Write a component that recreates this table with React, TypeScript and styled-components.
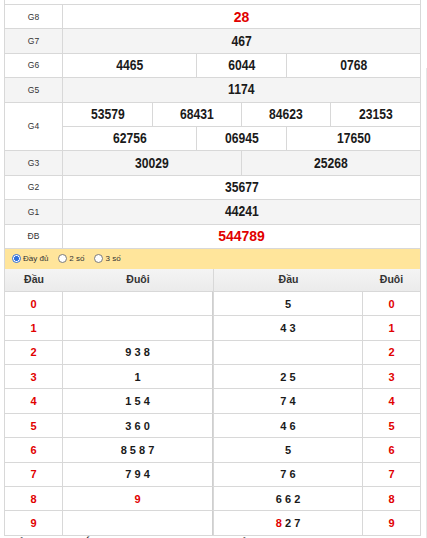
import React from "react";
import styled, { createGlobalStyle } from "styled-components";

const Global = createGlobalStyle`
  html, body { margin: 0; padding: 0; overflow: hidden; background: #fff; }
  body { font-family: "Liberation Sans", Arial, sans-serif; color: #333; }
  * { box-sizing: border-box; }
`;

const LINE = "#d8d8d8";
const RED = "#e10000";

const Page = styled.div`
  display: flex;
  align-items: flex-start;
`;

const Main = styled.main`
  margin-left: 4px;
  width: 417px;
  flex: none;
`;

const Aside = styled.aside`
  margin-left: 5px;
  margin-top: 68px;
  width: 1px;
  height: 470px;
  border-left: 1px solid #e6e6e6;
`;

const Board = styled.section`
  border-left: 1px solid ${LINE};
  border-right: 1px solid ${LINE};
`;

const CutRow = styled.div`
  height: 5px;
  border-bottom: 1px solid ${LINE};
`;

const PrizeRow = styled.div<{ $alt?: boolean; $h?: number }>`
  display: grid;
  grid-template-columns: 58px 1fr;
  height: ${(p) => (p.$h ?? 1) * 24.4}px;
  background: ${(p) => (p.$alt ? "#f4f4f4" : "#fff")};
  border-bottom: 1px solid ${LINE};
`;

const Label = styled.div`
  display: flex;
  align-items: center;
  justify-content: center;
  border-right: 1px solid ${LINE};
  font-size: 8.5px;
  color: #333;
`;

const Values = styled.div`
  display: flex;
  flex-direction: column;
`;

const SubRow = styled.div<{ $cols: string; $divided?: boolean }>`
  flex: 1;
  display: grid;
  grid-template-columns: ${(p) => p.$cols};
  border-bottom: ${(p) => (p.$divided ? `1px solid ${LINE}` : "none")};
`;

const Num = styled.div<{ $red?: boolean }>`
  display: flex;
  align-items: center;
  justify-content: center;
  border-right: 1px solid ${LINE};
  &:last-child { border-right: none; }
  padding-bottom: ${(p) => (p.$red ? "0" : "2px")};
  font-weight: bold;
  font-size: ${(p) => (p.$red ? "14px" : "15px")};
  color: ${(p) => (p.$red ? RED : "#1a1a1a")};
`;

const Narrow = styled.span<{ $red?: boolean }>`
  display: inline-block;
  transform: ${(p) => (p.$red ? "none" : "scaleX(0.81)")};
`;

const Bar = styled.div`
  height: 20px;
  background: #ffe59b;
  display: flex;
  align-items: center;
  padding-left: 7px;
  gap: 10px;
  font-size: 8px;
  color: #333;
`;

const Opt = styled.label`
  display: flex;
  align-items: center;
  gap: 2px;
`;

const Radio = styled.input`
  appearance: none;
  margin: 0;
  width: 9px;
  height: 9px;
  border-radius: 50%;
  border: 1px solid #7a7a7a;
  background: #fff;
  &:checked {
    border-color: #2f6fdc;
    background: radial-gradient(circle, #2f6fdc 0 2.2px, #fff 2.6px);
  }
`;

const Split = styled.div`
  display: flex;
  border-bottom: 1px solid ${LINE};
`;

const LotoTable = styled.div<{ $cols: string; $side: "l" | "r" }>`
  display: grid;
  grid-template-columns: ${(p) => p.$cols};
  width: ${(p) => (p.$side === "l" ? "208px" : "auto")};
  flex: ${(p) => (p.$side === "r" ? 1 : "none")};
  border-left: ${(p) => (p.$side === "r" ? `1px solid ${LINE}` : "none")};
`;

const Head = styled.div`
  height: 22px;
  display: flex;
  align-items: center;
  justify-content: center;
  padding-bottom: 1px;
  background: linear-gradient(#f4f4f4, #ebebeb);
  font-size: 10.5px;
  font-weight: bold;
  color: #333;
`;

const Cell = styled.div<{ $red?: boolean; $last?: boolean; $edge?: boolean }>`
  height: 24.4px;
  display: flex;
  align-items: center;
  justify-content: center;
  border-top: 1px solid ${LINE};
  border-right: ${(p) => (p.$last ? "none" : `1px solid ${p.$edge ? "#cfcfcf" : LINE}`)};
  font-size: 11px;
  font-weight: bold;
  color: ${(p) => (p.$red ? RED : "#1a1a1a")};
  white-space: pre;
`;

const Hot = styled.span`
  color: ${RED};
`;

const Note = styled.p`
  margin: 0;
  padding: 0 4px;
  font-size: 12px;
  line-height: 16px;
  font-weight: bold;
  color: #222;
  white-space: nowrap;
`;

type Prize = { label: string; rows: { cols: string; nums: string[] }[]; red?: boolean };

const prizes: Prize[] = [
  { label: "G8", rows: [{ cols: "1fr", nums: ["28"] }], red: true },
  { label: "G7", rows: [{ cols: "1fr", nums: ["467"] }] },
  { label: "G6", rows: [{ cols: "134px 90px 1fr", nums: ["4465", "6044", "0768"] }] },
  { label: "G5", rows: [{ cols: "1fr", nums: ["1174"] }] },
  {
    label: "G4",
    rows: [
      { cols: "90px 89px 89px 1fr", nums: ["53579", "68431", "84623", "23153"] },
      { cols: "134px 90px 1fr", nums: ["62756", "06945", "17650"] },
    ],
  },
  { label: "G3", rows: [{ cols: "179px 1fr", nums: ["30029", "25268"] }] },
  { label: "G2", rows: [{ cols: "1fr", nums: ["35677"] }] },
  { label: "G1", rows: [{ cols: "1fr", nums: ["44241"] }] },
  { label: "ĐB", rows: [{ cols: "1fr", nums: ["544789"] }], red: true },
];

type D = { d: string; hot?: boolean };
const head: D[][] = [
  [], [], [{ d: "9" }, { d: "3" }, { d: "8" }], [{ d: "1" }], [{ d: "1" }, { d: "5" }, { d: "4" }],
  [{ d: "3" }, { d: "6" }, { d: "0" }], [{ d: "8" }, { d: "5" }, { d: "8" }, { d: "7" }],
  [{ d: "7" }, { d: "9" }, { d: "4" }], [{ d: "9", hot: true }], [],
];
const tail: D[][] = [
  [{ d: "5" }], [{ d: "4" }, { d: "3" }], [], [{ d: "2" }, { d: "5" }], [{ d: "7" }, { d: "4" }],
  [{ d: "4" }, { d: "6" }], [{ d: "5" }], [{ d: "7" }, { d: "6" }],
  [{ d: "6" }, { d: "6" }, { d: "2" }], [{ d: "8", hot: true }, { d: "2" }, { d: "7" }],
];

const Digits = ({ list }: { list: D[] }) => (
  <span>
    {list.map((x, i) => (
      <React.Fragment key={i}>
        {i > 0 ? " " : ""}
        {x.hot ? <Hot>{x.d}</Hot> : x.d}
      </React.Fragment>
    ))}
  </span>
);

export default function App() {
  const idx = Array.from({ length: 10 }, (_, i) => i);
  return (
    <>
      <Global />
      <Page>
        <Main>
          <Board>
            <CutRow />
            {prizes.map((p, i) => (
              <PrizeRow key={p.label} $alt={i % 2 === 1} $h={p.rows.length}>
                <Label>{p.label}</Label>
                <Values>
                  {p.rows.map((r, j) => (
                    <SubRow key={j} $cols={r.cols} $divided={j < p.rows.length - 1}>
                      {r.nums.map((n) => (
                        <Num key={n} $red={p.red}>
                          <Narrow $red={p.red}>{n}</Narrow>
                        </Num>
                      ))}
                    </SubRow>
                  ))}
                </Values>
              </PrizeRow>
            ))}
            <Bar>
              <Opt>
                <Radio type="radio" name="mode" defaultChecked />
                Đầy đủ
              </Opt>
              <Opt>
                <Radio type="radio" name="mode" />2 số
              </Opt>
              <Opt>
                <Radio type="radio" name="mode" />3 số
              </Opt>
            </Bar>
            <Split>
              <LotoTable $cols="58px 1fr" $side="l">
                <Head>Đầu</Head>
                <Head>Đuôi</Head>
                {idx.map((i) => (
                  <React.Fragment key={i}>
                    <Cell $red>{i}</Cell>
                    <Cell $edge>
                      <Digits list={head[i]} />
                    </Cell>
                  </React.Fragment>
                ))}
              </LotoTable>
              <LotoTable $cols="149px 1fr" $side="r">
                <Head>Đầu</Head>
                <Head>Đuôi</Head>
                {idx.map((i) => (
                  <React.Fragment key={i}>
                    <Cell>
                      <Digits list={tail[i]} />
                    </Cell>
                    <Cell $red $last>
                      {i}
                    </Cell>
                  </React.Fragment>
                ))}
              </LotoTable>
            </Split>
          </Board>
          <Note>Xổ số miền Bắc ngày thứ Bảy: Kết quả xổ số đầy đủ nhất, cập nhật lúc</Note>
        </Main>
        <Aside />
      </Page>
    </>
  );
}
